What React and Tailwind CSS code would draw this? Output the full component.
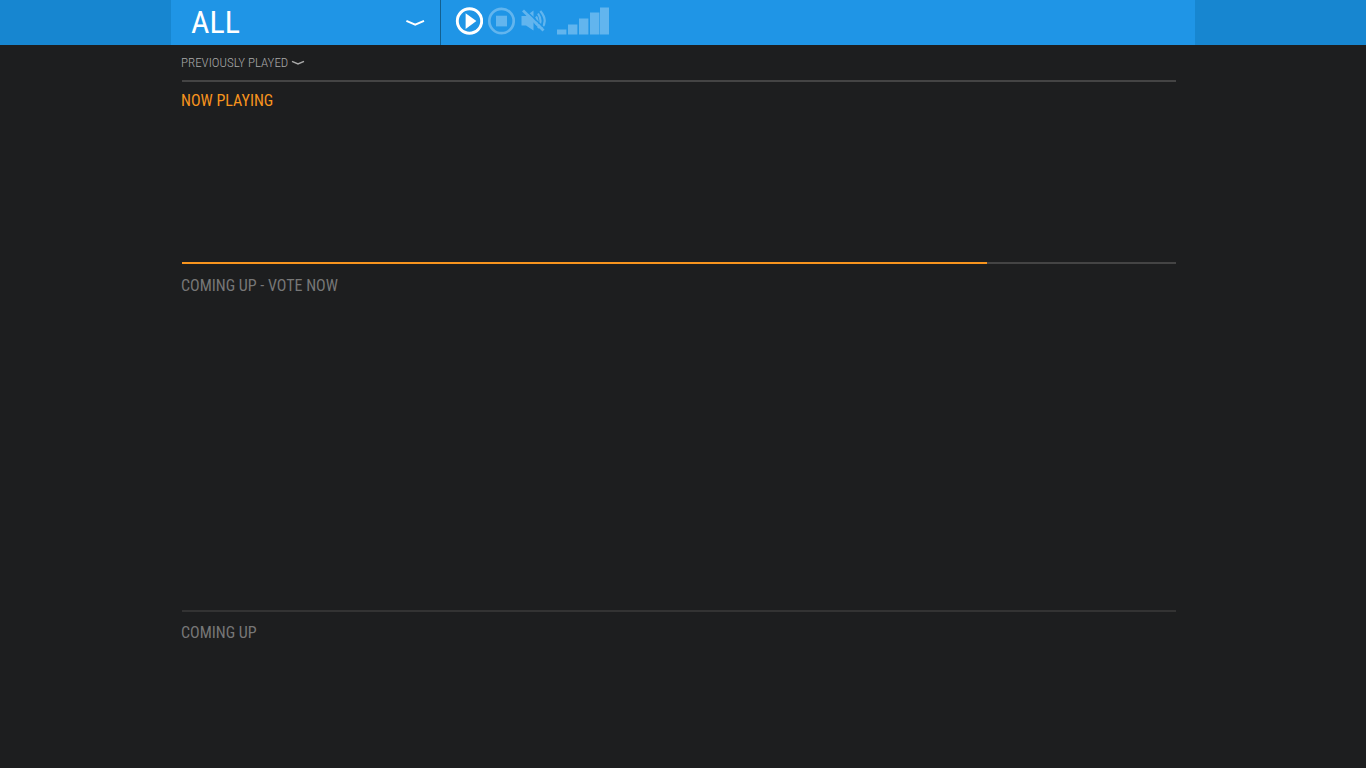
import { useState } from "react";

const stations = ["ALL"];

const bars = [
  { x: 0, y: 22 },
  { x: 11, y: 17 },
  { x: 22, y: 11 },
  { x: 33, y: 5 },
  { x: 43, y: 0 },
];

function StationSelect() {
  const [station, setStation] = useState("ALL");

  return (
    <div className="relative w-[270px] border-r border-[#126090]">
      <select
        aria-label="Station"
        value={station}
        onChange={(e) => setStation(e.target.value)}
        className="block h-[43px] w-full cursor-pointer appearance-none bg-transparent pl-5 text-[32px] leading-[40px] text-white outline-none"
      >
        {stations.map((name) => (
          <option key={name} value={name} className="text-black">
            {name}
          </option>
        ))}
      </select>
      <svg
        viewBox="0 0 20 8"
        className="pointer-events-none absolute top-[19px] right-[15px] h-2 w-5"
        fill="none"
        stroke="#fff"
        strokeWidth="2"
      >
        <path d="M1.4 1.8 L10.2 5.6 L19 1.8" />
      </svg>
    </div>
  );
}

function Player() {
  return (
    <div className="flex items-start pt-[7px] pl-[14px]">
      <button aria-label="Play" className="mr-1 cursor-pointer">
        <svg viewBox="0 0 28 28" className="size-7">
          <circle cx="14.5" cy="14" r="12.2" fill="none" stroke="#fff" strokeWidth="2.9" />
          <path d="M10.6 6.3 L21.4 14 L10.6 21.9 Z" fill="#fff" />
        </svg>
      </button>
      <button aria-label="Stop" className="mr-1 cursor-pointer">
        <svg viewBox="0 0 28 28" className="size-7">
          <circle cx="14.5" cy="14" r="12.2" fill="none" stroke="#62b5ee" strokeWidth="2.7" />
          <path d="M9 8.7 H20 V19.4 H9 Z" fill="#62b5ee" />
        </svg>
      </button>
      <button aria-label="Mute" className="mr-2 cursor-pointer">
        <svg viewBox="0 0 28 28" className="size-7">
          <path d="M2.5 9 H7 L14.5 3.5 V23.5 L7 18.5 H2.5 Z" fill="#62b5ee" />
          <g fill="none" stroke="#62b5ee" strokeWidth="2.2">
            <path d="M17 9.5 Q20 13.8 17 18" />
            <path d="M19 6.5 Q24 13.8 19 21" />
            <path d="M21.3 4 Q29.5 13.5 22.5 22" />
          </g>
          <path d="M5.8 2.5 L26.3 22" stroke="#1f95e6" strokeWidth="1.6" />
          <path d="M4 3.5 L24.5 23.5" stroke="#62b5ee" strokeWidth="2.8" />
        </svg>
      </button>
      <button aria-label="Volume" className="cursor-pointer">
        <svg viewBox="0 0 54 28" className="h-7 w-[54px]" fill="#62b5ee">
          {bars.map((bar) => (
            <rect key={bar.x} x={bar.x + 2} y={bar.y + 0.5} width="9.4" height={27 - bar.y} />
          ))}
        </svg>
      </button>
    </div>
  );
}

export default function App() {
  const [progress] = useState(81);

  return (
    <div className="min-h-screen bg-[#1d1e1f] font-['Roboto_Condensed',Roboto,sans-serif] text-base text-[#777]">
      <header className="bg-[#1786d0]">
        <div className="mx-auto flex h-[45px] max-w-5xl bg-[#1f95e6]">
          <StationSelect />
          <Player />
        </div>
      </header>

      <main className="mx-auto max-w-5xl pr-[19px] pl-[10px]">
        <section className="flex h-[35px] items-center">
          <button className="flex cursor-pointer items-center gap-[3px] text-[13px] font-light text-[#aaa]">
            PREVIOUSLY PLAYED
            <svg viewBox="0 0 14 6" className="h-1.5 w-3.5" fill="none" stroke="#aaa" strokeWidth="1.5">
              <path d="M1 1.4 L7 4 L13 1.4" />
            </svg>
          </button>
        </section>

        <section>
          <hr className="ml-px border-t-2 border-[#444]" />
          <h2 className="min-h-[180px] pt-[7px] text-[#f7941e]">NOW PLAYING</h2>
        </section>

        <section>
          <div
            role="progressbar"
            aria-label="Song progress"
            aria-valuenow={progress}
            className="ml-px h-0.5 bg-[#444]"
          >
            <div className="h-full bg-[#f7941e]" style={{ width: `${progress}%` }} />
          </div>
          <h2 className="min-h-[346px] pt-[10px]">COMING UP - VOTE NOW</h2>
        </section>

        <section>
          <hr className="ml-px border-t-2 border-[#333]" />
          <h2 className="pt-[9px]">COMING UP</h2>
        </section>
      </main>
    </div>
  );
}
